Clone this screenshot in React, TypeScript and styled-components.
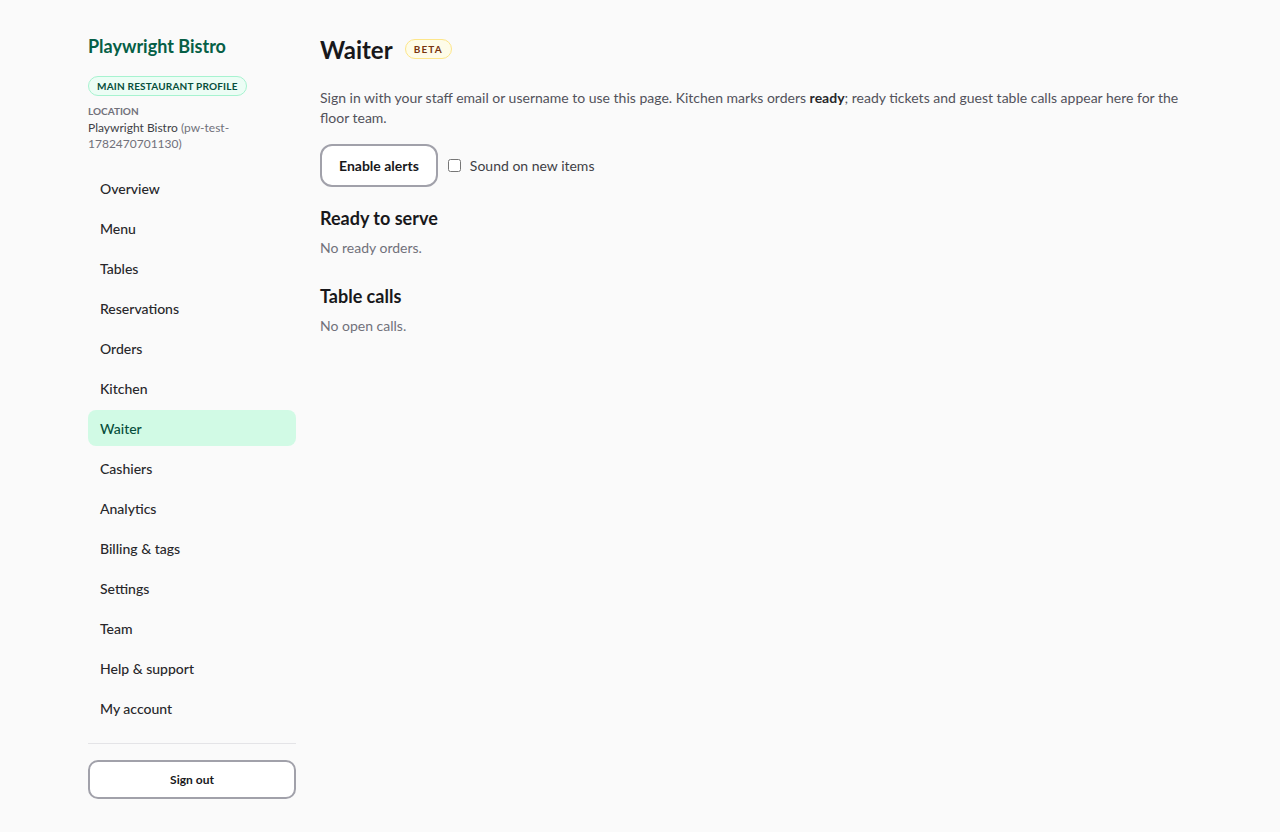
import styled, { createGlobalStyle } from 'styled-components';

const GlobalStyle = createGlobalStyle`
  html, body {
    margin: 0;
    background: #fafafa;
    font-family: Lato, "Noto Sans", sans-serif;
    color: #18181b;
  }
  * { box-sizing: border-box; }
`;

const navItems = [
  'Overview',
  'Menu',
  'Tables',
  'Reservations',
  'Orders',
  'Kitchen',
  'Waiter',
  'Cashiers',
  'Analytics',
  'Billing & tags',
  'Settings',
  'Team',
  'Help & support',
  'My account',
];

export default function App() {
  return (
    <>
      <GlobalStyle />
      <Layout>
        <Sidebar>
          <Brand>Playwright Bistro</Brand>
          <ProfileBadge>Main restaurant profile</ProfileBadge>
          <Label>Location</Label>
          <LocationText>
            Playwright Bistro <Muted>(pw-test-1782470701130)</Muted>
          </LocationText>
          <Nav>
            {navItems.map((item) => (
              <NavItem key={item} $active={item === 'Waiter'}>
                {item}
              </NavItem>
            ))}
          </Nav>
          <Divider />
          <SignOut>Sign out</SignOut>
        </Sidebar>

        <Main>
          <TitleRow>
            <Title>Waiter</Title>
            <BetaBadge>Beta</BetaBadge>
          </TitleRow>
          <Intro>
            Sign in with your staff email or username to use this page. Kitchen marks orders{' '}
            <strong>ready</strong>; ready tickets and guest table calls appear here for the floor
            team.
          </Intro>
          <Controls>
            <OutlineButton>Enable alerts</OutlineButton>
            <CheckLabel>
              <input type="checkbox" />
              Sound on new items
            </CheckLabel>
          </Controls>
          <Section>
            <SectionTitle>Ready to serve</SectionTitle>
            <Empty>No ready orders.</Empty>
          </Section>
          <Section>
            <SectionTitle>Table calls</SectionTitle>
            <Empty>No open calls.</Empty>
          </Section>
        </Main>
      </Layout>
    </>
  );
}

const Layout = styled.div`
  display: flex;
  gap: 24px;
  padding: 32px 88px;
  min-height: 832px;
`;

const Sidebar = styled.aside`
  width: 208px;
  flex-shrink: 0;
  display: flex;
  flex-direction: column;
`;

const Brand = styled.div`
  font-size: 18px;
  font-weight: 700;
  color: #065f46;
  line-height: 28px;
`;

const ProfileBadge = styled.span`
  align-self: flex-start;
  margin-top: 16px;
  padding: 0 8px;
  height: 20px;
  line-height: 18px;
  border: 1px solid #a7f3d0;
  border-radius: 999px;
  background: #ecfdf5;
  color: #064e3b;
  font-size: 10px;
  font-weight: 700;
  text-transform: uppercase;
  letter-spacing: 0.02em;
`;

const Label = styled.div`
  margin-top: 8px;
  font-size: 10px;
  font-weight: 700;
  text-transform: uppercase;
  color: #71717a;
  line-height: 14px;
`;

const LocationText = styled.div`
  margin-top: 2px;
  font-size: 12px;
  line-height: 16px;
  color: #3f3f46;
  word-break: break-word;
`;

const Muted = styled.span`
  color: #71717a;
`;

const Nav = styled.nav`
  margin-top: 18px;
  display: flex;
  flex-direction: column;
  gap: 4px;
`;

const NavItem = styled.a<{ $active?: boolean }>`
  display: flex;
  align-items: center;
  height: 36px;
  padding: 0 12px;
  border-radius: 8px;
  font-size: 14px;
  font-weight: 500;
  color: ${(p) => (p.$active ? '#064e3b' : '#27272a')};
  background: ${(p) => (p.$active ? '#d1fae5' : 'transparent')};
  cursor: pointer;
`;

const Divider = styled.hr`
  margin: 17px 0 0;
  border: 0;
  border-top: 1px solid #e4e4e7;
`;

const SignOut = styled.button`
  margin-top: 16px;
  height: 39px;
  border: 2px solid #a1a1aa;
  border-radius: 10px;
  background: #ffffff;
  font-family: inherit;
  font-size: 12px;
  font-weight: 700;
  color: #18181b;
  cursor: pointer;
`;

const Main = styled.main`
  flex: 1;
  min-width: 0;
`;

const TitleRow = styled.div`
  display: flex;
  align-items: center;
  gap: 12px;
  height: 34px;
`;

const Title = styled.h1`
  margin: 0;
  font-size: 24px;
  font-weight: 700;
  color: #18181b;
`;

const BetaBadge = styled.span`
  padding: 0 8px;
  height: 20px;
  line-height: 18px;
  border: 1px solid #fde68a;
  border-radius: 999px;
  background: #fefce8;
  color: #78350f;
  font-size: 10px;
  font-weight: 700;
  text-transform: uppercase;
  letter-spacing: 0.12em;
`;

const Intro = styled.p`
  margin: 22px 0 0;
  font-size: 14px;
  line-height: 20px;
  color: #52525b;

  strong {
    color: #27272a;
  }
`;

const Controls = styled.div`
  margin-top: 16px;
  display: flex;
  align-items: center;
  gap: 10px;
`;

const OutlineButton = styled.button`
  height: 43px;
  padding: 0 17px;
  border: 2px solid #a1a1aa;
  border-radius: 12px;
  background: #ffffff;
  font-family: inherit;
  font-size: 14px;
  font-weight: 700;
  color: #18181b;
  cursor: pointer;
`;

const CheckLabel = styled.label`
  display: flex;
  align-items: center;
  gap: 9px;
  font-size: 14px;
  color: #3f3f46;

  input {
    margin: 0;
    width: 13px;
    height: 13px;
  }
`;

const Section = styled.section`
  margin-top: 18px;

  & + & {
    margin-top: 25px;
  }
`;

const SectionTitle = styled.h2`
  margin: 0;
  font-size: 18px;
  font-weight: 700;
  line-height: 26px;
  color: #18181b;
`;

const Empty = styled.p`
  margin: 7px 0 0;
  font-size: 14px;
  line-height: 20px;
  color: #71717a;
`;
